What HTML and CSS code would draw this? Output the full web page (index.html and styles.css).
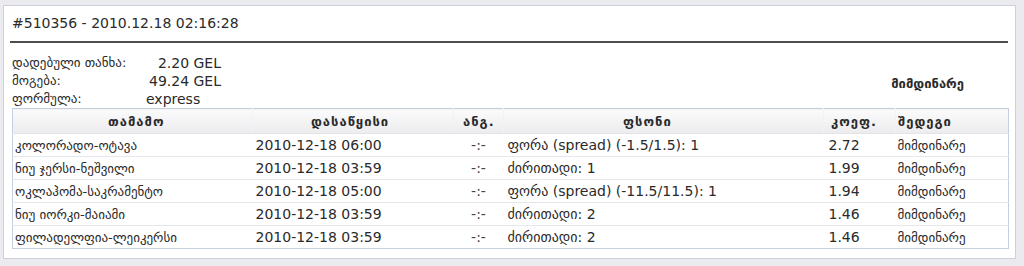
FILE: index.html
```html
<!DOCTYPE html>
<html>
<head>
<meta charset="utf-8">
<link rel="stylesheet" href="styles.css">
</head>
<body>
<div class="panel">
  <div class="title">#510356 - 2010.12.18 02:16:28</div>
  <div class="rule"></div>
  <div class="info">
    <div class="summary">
      <span class="lbl">დადებული თანხა:</span><span class="val num">2.20 GEL</span>
      <span class="lbl">მოგება:</span><span class="val num">49.24 GEL</span>
      <span class="lbl">ფორმულა:</span><span class="val">express</span>
    </div>
    <div class="status">მიმდინარე</div>
  </div>
  <table class="bets">
    <colgroup>
      <col class="c-team"><col class="c-date"><col class="c-ang"><col class="c-bet"><col class="c-coef"><col class="c-res">
    </colgroup>
    <thead>
      <tr><th class="h-team">თამამო</th><th class="h-date">დასაწყისი</th><th class="h-ang">ანგ.</th><th class="h-bet">ფსონი</th><th class="h-coef">კოეფ.</th><th class="h-res">შედეგი</th></tr>
    </thead>
    <tbody>
      <tr><td class="team">კოლორადო-ოტავა</td><td class="date">2010-12-18 06:00</td><td class="ang">-:-</td><td class="bet">ფორა (spread) (-1.5/1.5): 1</td><td class="coef">2.72</td><td class="res">მიმდინარე</td></tr>
      <tr><td class="team">ნიუ ჯერსი-ნეშვილი</td><td class="date">2010-12-18 03:59</td><td class="ang">-:-</td><td class="bet">ძირითადი: 1</td><td class="coef">1.99</td><td class="res">მიმდინარე</td></tr>
      <tr><td class="team">ოკლაჰომა-საკრამენტო</td><td class="date">2010-12-18 05:00</td><td class="ang">-:-</td><td class="bet">ფორა (spread) (-11.5/11.5): 1</td><td class="coef">1.94</td><td class="res">მიმდინარე</td></tr>
      <tr><td class="team">ნიუ იორკი-მაიამი</td><td class="date">2010-12-18 03:59</td><td class="ang">-:-</td><td class="bet">ძირითადი: 2</td><td class="coef">1.46</td><td class="res">მიმდინარე</td></tr>
      <tr><td class="team">ფილადელფია-ლეიკერსი</td><td class="date">2010-12-18 03:59</td><td class="ang">-:-</td><td class="bet">ძირითადი: 2</td><td class="coef">1.46</td><td class="res">მიმდინარე</td></tr>
    </tbody>
  </table>
</div>
</body>
</html>
```

FILE: styles.css
```css
html, body {
  margin: 0;
  padding: 0;
}
body {
  background: #ebebef;
  font-family: "DejaVu Sans", Verdana, sans-serif;
  font-size: 14px;
  color: #2a2a2a;
}
.panel {
  margin: 5px 8px 0 3px;
  border: 1px solid #c9d0de;
  background: #fff;
  padding: 0 7px 9px 6px;
}
.title {
  height: 35px;
  line-height: 34px;
  padding-left: 2px;
}
.rule {
  height: 2px;
  background: #4d4d4d;
}
.info {
  display: flex;
  justify-content: space-between;
  align-items: center;
  margin-top: 11px;
  padding-left: 2px;
}
.summary {
  display: grid;
  grid-template-columns: 134px 75px;
  line-height: 18px;
}
.lbl {
  font-size: 13px;
}
.val.num {
  text-align: right;
}
.status {
  font-size: 13px;
  font-weight: bold;
  padding-right: 44px;
  padding-top: 4px;
}
.bets {
  margin-left: 2px;
  width: 996px;
  border-collapse: collapse;
  border: 1px solid #c5cfe0;
  table-layout: fixed;
}
.c-team { width: 240px; }
.c-date { width: 201px; }
.c-ang { width: 50px; }
.c-bet { width: 320px; }
.c-coef { width: 72px; }
.c-res { width: 113px; }
.bets th {
  height: 24px;
  padding: 0;
  font-size: 13px;
  font-weight: bold;
  letter-spacing: 1px;
  text-align: left;
  white-space: nowrap;
  background: linear-gradient(#fbfbfc, #ececee);
  border-left: 1px solid #f2f2f5;
  border-bottom: 1px solid #e2e4e8;
}
.bets th:first-child { border-left: none; }
.h-team { padding-left: 95px !important; }
.h-date { padding-left: 58px !important; }
.h-ang { padding-left: 9px !important; }
.h-bet { padding-left: 119px !important; }
.h-coef { padding-left: 7px !important; }
.h-res { padding-left: 2px !important; }
.bets td {
  height: 22px;
  padding: 0;
  border-bottom: 1px solid #e6e8ec;
  white-space: nowrap;
}
.bets tbody tr:last-child td { border-bottom: none; }
.team { font-size: 13px; padding-left: 2px !important; }
.date { padding-left: 3px !important; }
.ang { text-align: center; color: #444; }
.bet { padding-left: 4px !important; }
.coef { padding-left: 5px !important; }
.res { padding-left: 2px !important; font-size: 13px; }
```
